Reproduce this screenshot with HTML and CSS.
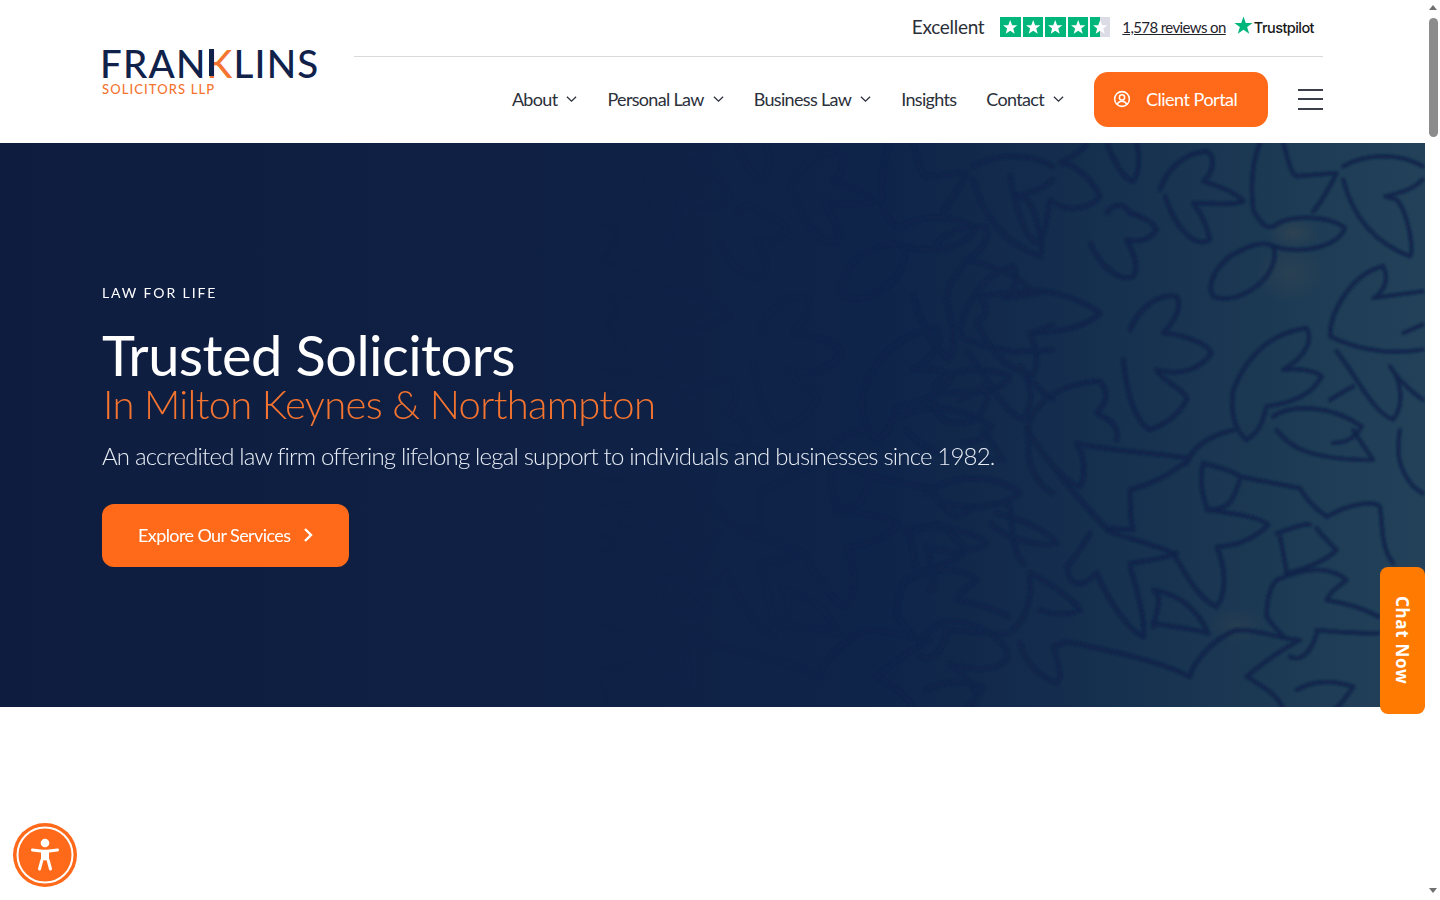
FILE: index.html
```html
<!DOCTYPE html>
<html lang="en">
<head>
<meta charset="utf-8">
<title>Franklins Solicitors LLP</title>
<link rel="stylesheet" href="styles.css">
</head>
<body>
<div class="frame">
  <div class="page">
    <header class="site-header">
      <a class="logo" href="#">
        <span class="logo-name">FRAN<span class="logo-k">K</span>LINS</span>
        <span class="logo-sub">SOLICITORS LLP</span>
      </a>
      <div class="header-right">
        <div class="trust-row">
          <span class="trust-word">Excellent</span>
          <div class="stars">
            <span class="star-box"><svg viewBox="0 0 20 20"><polygon points="10,3 11.9,8 17,8.2 13,11.4 14.4,16.5 10,13.6 5.6,16.5 7,11.4 3,8.2 8.1,8" fill="#fff"/></svg></span>
            <span class="star-box"><svg viewBox="0 0 20 20"><polygon points="10,3 11.9,8 17,8.2 13,11.4 14.4,16.5 10,13.6 5.6,16.5 7,11.4 3,8.2 8.1,8" fill="#fff"/></svg></span>
            <span class="star-box"><svg viewBox="0 0 20 20"><polygon points="10,3 11.9,8 17,8.2 13,11.4 14.4,16.5 10,13.6 5.6,16.5 7,11.4 3,8.2 8.1,8" fill="#fff"/></svg></span>
            <span class="star-box"><svg viewBox="0 0 20 20"><polygon points="10,3 11.9,8 17,8.2 13,11.4 14.4,16.5 10,13.6 5.6,16.5 7,11.4 3,8.2 8.1,8" fill="#fff"/></svg></span>
            <span class="star-box star-part"><svg viewBox="0 0 20 20"><polygon points="10,3 11.9,8 17,8.2 13,11.4 14.4,16.5 10,13.6 5.6,16.5 7,11.4 3,8.2 8.1,8" fill="#fff"/></svg></span>
          </div>
          <a class="trust-link" href="#">1,578 reviews on</a>
          <span class="tp-brand">
            <svg class="tp-star" viewBox="0 0 20 20"><polygon points="10,0.5 12.4,7.4 19.6,7.4 13.8,11.7 16,18.8 10,14.4 4,18.8 6.2,11.7 0.4,7.4 7.6,7.4" fill="#00b67a"/></svg>
            <span class="tp-name">Trustpilot</span>
          </span>
        </div>
        <nav class="main-nav">
          <a class="nav-item" href="#">About <svg class="chev" viewBox="0 0 12 8"><path d="M1 1.5 6 6.3 11 1.5"/></svg></a>
          <a class="nav-item" href="#">Personal Law <svg class="chev" viewBox="0 0 12 8"><path d="M1 1.5 6 6.3 11 1.5"/></svg></a>
          <a class="nav-item" href="#">Business Law <svg class="chev" viewBox="0 0 12 8"><path d="M1 1.5 6 6.3 11 1.5"/></svg></a>
          <a class="nav-item" href="#">Insights</a>
          <a class="nav-item" href="#">Contact <svg class="chev" viewBox="0 0 12 8"><path d="M1 1.5 6 6.3 11 1.5"/></svg></a>
          <a class="portal-btn" href="#">
            <svg class="portal-icon" viewBox="0 0 20 20"><circle cx="10" cy="10" r="8.2"/><circle cx="10" cy="8.2" r="2.9"/><path d="M4.8 16c.8-2.4 2.6-3.5 5.2-3.5s4.400 1.100 5.200 3.500"/></svg>
            <span>Client Portal</span>
          </a>
          <button class="burger" aria-label="Menu"><span></span><span></span><span></span></button>
        </nav>
      </div>
    </header>

    <section class="hero">
      <svg class="hero-leaves" viewBox="0 0 1425 564" preserveAspectRatio="none" aria-hidden="true">
        <defs>
          <linearGradient id="fade" x1="0" x2="1" y1="0" y2="0">
            <stop offset="0.42" stop-color="#fff" stop-opacity="0"/>
            <stop offset="0.62" stop-color="#fff" stop-opacity=".5"/>
            <stop offset="0.78" stop-color="#fff" stop-opacity="1"/>
          </linearGradient>
          <mask id="fadeMask"><rect width="1425" height="564" fill="url(#fade)"/></mask>
          <filter id="soft" x="-5%" y="-5%" width="110%" height="110%"><feGaussianBlur stdDeviation="0.8"/></filter>
          <g id="topset">
            <path d="M330 100C345 180 370 280 410 300C440 280 440 220 450 170C490 210 570 200 600 160C570 100 520 60 480 60C520 40 550 20 560 0"/>
            <path d="M620 0C640 50 670 110 700 115C720 80 720 40 710 0"/>
            <path d="M780 140C800 80 850 30 920 25C950 40 940 90 910 115C960 130 1010 150 1030 175C990 190 930 180 880 180C900 210 920 240 930 290C900 310 860 290 820 220C805 190 800 170 795 160"/>
            <path d="M1060 200C1050 120 1060 50 1080 0M1150 0C1165 50 1170 90 1190 100L1310 90C1290 130 1270 170 1240 205M1060 200C1080 240 1100 260 1120 250C1170 210 1290 220 1335 255C1320 300 1230 340 1120 310"/>
            <path d="M1120 310C1090 290 1040 310 990 340C940 380 920 430 940 460C990 480 1060 450 1100 400C1120 370 1130 340 1120 310"/>
            <path d="M1330 70C1400 30 1500 30 1568 70M1330 110C1350 190 1400 290 1530 340C1545 320 1520 200 1490 170L1455 160C1500 150 1540 140 1568 110"/>
            <path d="M620 210C650 170 680 190 690 210C730 220 760 240 770 260C750 290 720 300 680 290C700 330 720 370 700 400C660 420 600 370 570 300"/>
            <path d="M110 300C150 260 220 240 260 255C270 290 240 330 200 350C280 370 360 400 390 440C470 440 560 480 600 510C560 550 480 570 390 570C410 620 420 660 400 695C340 690 280 640 230 540C260 520 270 500 240 460C300 450 340 450 390 440M200 350C170 390 140 430 140 470C160 540 170 600 150 650C100 620 60 530 40 460"/>
            <path d="M100 730C140 690 220 660 330 700C310 740 230 760 120 745M100 770C110 820 130 860 230 830C260 780 270 760 260 740"/>
            <path d="M690 560C720 490 780 450 830 460C850 490 820 540 790 570C850 575 920 600 935 630C900 680 840 700 770 680C790 720 860 740 860 770C830 830 780 850 750 860C710 840 680 760 670 650"/>
            <path d="M380 870C390 790 470 720 600 715C630 750 620 780 590 810C630 830 660 850 650 890"/>
            <path d="M1000 740C1040 640 1110 570 1220 555C1240 590 1220 640 1150 680C1190 675 1240 680 1265 700C1240 750 1180 780 1100 790C1090 830 1080 870 1040 890C1000 860 990 800 1000 740M1120 820C1180 780 1300 790 1385 850C1370 880 1340 900 1300 900M1290 770L1360 730"/>
            <path d="M1290 580C1290 500 1360 390 1450 370C1470 410 1450 450 1420 465L1568 445M1290 580C1350 610 1450 640 1568 620M1310 625C1370 700 1420 810 1480 830C1510 790 1510 720 1470 670C1500 720 1540 750 1568 770M1510 570L1568 545"/>
          </g>
          <g id="botset">
            <path d="M380 0C420 60 480 150 540 170C560 130 550 70 530 40C600 60 780 70 870 85C820 130 760 160 690 180C690 230 690 270 700 300L620 295C570 250 520 180 480 140M860 100C880 50 920 20 1000 0"/>
            <path d="M80 190C160 130 280 130 360 190C310 230 220 240 120 220M290 250C370 270 440 300 470 340C420 350 320 330 270 280"/>
            <path d="M60 630C110 570 160 560 230 590C300 620 330 660 320 690C280 730 200 720 150 700C220 760 240 790 220 830"/>
            <path d="M20 300C60 280 200 290 260 340C220 370 130 370 80 350C100 420 110 470 90 480"/>
            <path d="M920 230C900 180 900 130 910 100C960 110 1010 130 1020 140L1200 175C1220 210 1250 240 1280 260C1350 220 1420 210 1440 230C1450 290 1440 350 1480 400M1020 150C1000 200 1000 240 920 240C1000 250 1080 260 1105 285C1060 330 1000 350 950 350C980 420 980 490 950 530C900 510 860 440 820 370C760 340 690 330 620 300M1130 310C1190 290 1215 280 1230 285M1140 320C1150 370 1160 420 1160 430C1200 420 1270 400 1310 360C1280 330 1260 310 1250 295"/>
            <path d="M500 410C530 380 550 340 570 310M690 400C760 390 810 380 830 370M690 410C710 470 740 590 730 620C680 600 620 500 590 430C550 470 510 480 500 410M390 430C440 450 520 510 540 540C500 560 450 550 420 540M390 430C400 500 380 560 340 600"/>
            <path d="M760 580C820 590 900 600 925 610M760 590C770 540 790 500 760 480C820 490 880 520 920 600"/>
            <path d="M870 740C880 690 950 620 1010 600C1090 600 1150 630 1200 630C1160 650 1100 690 1040 740C1090 770 1140 800 1150 840M870 740C770 690 620 660 500 635L460 650C470 690 490 740 470 760C400 730 370 680 360 640"/>
            <path d="M1100 560C1100 500 1110 470 1130 450C1200 420 1280 400 1340 450C1300 480 1290 490 1280 510C1340 520 1400 540 1435 560M1250 600C1340 610 1400 610 1435 610M1250 610C1240 650 1210 700 1170 680M1100 560C1120 590 1130 600 1150 620M1190 780C1240 750 1300 750 1360 770C1340 800 1320 830 1300 840"/>
            <path d="M1130 0C1160 40 1210 90 1420 90C1380 30 1370 20 1360 0M1500 0C1490 60 1490 110 1540 170L1568 190"/>
          </g>
        </defs>
        <g class="leaf-lines" mask="url(#fadeMask)" filter="url(#soft)">
          <use href="#topset" transform="translate(900 0) scale(.3333)"/>
          <use href="#botset" transform="translate(900 287) scale(.3333)"/>
          <use href="#topset" transform="translate(530 0) scale(.3333)"/>
          <use href="#botset" transform="translate(530 287) scale(.3333)"/>
        </g>
      </svg>
      <div class="hero-copy">
        <p class="eyebrow">LAW FOR LIFE</p>
        <h1 class="hero-title">Trusted Solicitors</h1>
        <h2 class="hero-sub">In Milton Keynes &amp; Northampton</h2>
        <p class="hero-text">An accredited law firm offering lifelong legal support to individuals and businesses since 1982.</p>
        <a class="explore-btn" href="#">Explore Our Services
          <svg class="explore-chev" viewBox="0 0 10 16"><path d="M2 2 8 8 2 14"/></svg>
        </a>
      </div>
    </section>
    <div class="rest"></div>
  </div>

  <aside class="scrollbar" aria-hidden="true">
    <span class="arrow-up"></span>
    <span class="thumb"></span>
    <span class="arrow-down"></span>
  </aside>
</div>

<a class="chat-tab" href="#">Chat Now</a>

<button class="a11y" aria-label="Accessibility">
  <svg viewBox="0 0 64 64">
    <circle cx="32" cy="32" r="32" fill="#ff6a1a"/>
    <circle cx="32" cy="32" r="27.500" fill="none" stroke="#fff" stroke-width="2"/>
    <circle cx="32" cy="20" r="4.300" fill="#fff"/>
    <path d="M19.500 27 32 28.500 44.500 27" fill="none" stroke="#fff" stroke-width="3" stroke-linecap="round"/>
    <path d="M32 28v8M32 34.500c-2 0-3 1-3.500 4L26.500 46M32 34.500c2 0 3 1 3.500 4L37.500 46M29.500 29v7M34.500 29v7" fill="none" stroke="#fff" stroke-width="3" stroke-linecap="round" stroke-linejoin="round"/>
  </svg>
</button>
</body>
</html>
```

FILE: styles.css
```css
* { box-sizing: border-box; }
html, body { margin: 0; height: 100%; overflow: hidden; background: #fff; }
body { font-family: Lato, "Liberation Sans", sans-serif; color: #2b303a; }
a { text-decoration: none; color: inherit; }
svg { display: block; }

.frame { display: flex; height: 100vh; }
.page { flex: 1; min-width: 0; display: flex; flex-direction: column; }
.rest { flex: 1; background: #fff; }

/* Header */
.site-header { height: 143px; padding: 0 102px; display: flex; flex: none; }
.logo { width: 252px; flex: none; display: flex; flex-direction: column; padding-top: 46px; }
.logo-name { font-size: 38.500px; line-height: 34px; font-weight: 500; letter-spacing: 1.200px; color: #10214a; white-space: nowrap; margin-left: -2px; }
.logo-k { position: relative; display: inline-block; color: #f47430; }
.logo-k::before { content: ""; position: absolute; left: 2.500px; top: 3px; width: 4.500px; height: 27px; background: #10214a; }
.logo-sub { font-size: 13px; line-height: 14px; font-weight: 500; letter-spacing: 1.100px; color: #f47430; margin-left: 0; margin-top: 2px; white-space: nowrap; }
.header-right { flex: 1; min-width: 0; display: flex; flex-direction: column; }

.trust-row { height: 57px; border-bottom: 1px solid #d9d9d9; display: flex; align-items: center; justify-content: flex-end; padding-right: 9px; padding-bottom: 3px; }
.trust-word { font-size: 19px; color: #2b2f38; margin-right: 16px; letter-spacing: -.3px; }
.stars { display: flex; gap: 2px; margin-right: 12px; }
.star-box { width: 20.400px; height: 20px; background: #00b67a; display: block; }
.star-part { background: linear-gradient(90deg, #00b67a 50%, #dcdce6 50%); }
.trust-link { font-size: 15px; color: #1f232c; text-decoration: underline; margin-right: 8px; letter-spacing: -.6px; }
.tp-brand { display: flex; align-items: flex-end; }
.tp-star { width: 19px; height: 19px; margin-bottom: 2px; }
.tp-name { font-family: Inter, "Liberation Sans", sans-serif; font-size: 14.500px; font-weight: 500; letter-spacing: -.55px; color: #191919; margin-left: 1px; line-height: 18px; }

.main-nav { flex: 1; display: flex; align-items: center; justify-content: flex-end; padding-bottom: 2px; gap: 30px; }
.nav-item { display: flex; align-items: center; gap: 9px; font-size: 18px; letter-spacing: -.68px; color: #2b303a; white-space: nowrap; }
.chev { width: 11px; height: 8px; fill: none; stroke: #2b303a; stroke-width: 1.400; }
.portal-btn { width: 174px; height: 55px; background: #ff6a1a; color: #fff; border-radius: 14px; display: flex; align-items: center; padding-left: 19px; gap: 15px; font-size: 18px; letter-spacing: -.5px; }
.portal-icon { width: 18px; height: 18px; fill: none; stroke: #fff; stroke-width: 1.700; }
.burger { width: 25px; height: 21px; margin-left: 0; border: 0; padding: 0; background: none; display: flex; flex-direction: column; justify-content: space-between; }
.burger span { display: block; height: 2px; width: 100%; background: #3a3f4a; }

/* Hero */
.hero { position: relative; height: 564px; flex: none; overflow: hidden; padding: 141px 102px 0;
  background:
    radial-gradient(ellipse 26px 16px at 1293px 90px, rgba(120,100,70,.18), transparent),
    radial-gradient(ellipse 34px 30px at 1290px 130px, rgba(120,100,70,.14), transparent),
    radial-gradient(ellipse 30px 18px at 1235px 482px, rgba(120,100,70,.12), transparent),
    linear-gradient(90deg, #0e1d3f 0%, #0f2044 35%, #0f2449 62%, #16304f 78%, #1e3c55 92%, #23425a 100%); }
.hero-leaves { position: absolute; inset: 0; width: 100%; height: 100%; }
.leaf-lines { fill: none; stroke: rgba(11, 34, 72, .82); stroke-width: 12; stroke-linecap: round; stroke-linejoin: round; }
.hero-copy { position: relative; }
.eyebrow { margin: 0; font-size: 14px; line-height: 18px; letter-spacing: 1.900px; color: #fff; }
.hero-title { margin: 25px 0 0; font-size: 56px; line-height: 56px; font-weight: 400; color: #fff; letter-spacing: -.55px; }
.hero-sub { margin: 0 0 0 1px; font-size: 40px; line-height: 42px; font-weight: 300; color: #f47430; letter-spacing: -.67px; }
.hero-text { margin: 15px 0 0; font-size: 24px; line-height: 32px; font-weight: 300; color: #e8edf5; letter-spacing: -.82px; }
.explore-btn { margin-top: 32px; width: 247px; height: 63px; background: #ff6a1a; color: #fff; border-radius: 12px; display: flex; align-items: center; padding-left: 36px; padding-bottom: 1px; gap: 13px; font-size: 18px; letter-spacing: -.6px; }
.explore-chev { width: 10px; height: 16px; fill: none; stroke: #fff; stroke-width: 2.400; }

/* Scrollbar */
.scrollbar { width: 15px; flex: none; background: #fff; display: flex; flex-direction: column; align-items: center; padding: 5px 0 7px; }
.thumb { width: 9px; height: 119px; margin-top: 8px; background: #8c8c8c; border-radius: 5px; margin-left: 1px; }
.arrow-up { width: 0; height: 0; border-left: 4px solid transparent; border-right: 4px solid transparent; border-bottom: 5px solid #707070; margin-left: 1px; }
.arrow-down { width: 0; height: 0; margin-top: auto; border-left: 4px solid transparent; border-right: 4px solid transparent; border-top: 5px solid #707070; margin-left: 1px; }

/* Floating */
.chat-tab { position: fixed; left: 1380px; top: 567px; width: 45px; height: 147px; background: #ff7a00; color: #fff; border-radius: 8px; writing-mode: vertical-rl; display: flex; align-items: center; justify-content: center; font-family: "Noto Sans", "Open Sans", sans-serif; font-weight: 700; font-size: 17px; letter-spacing: .7px; }
.a11y { position: fixed; left: 13px; top: 823px; width: 64px; height: 64px; padding: 0; border: 0; background: none; border-radius: 50%; }
```
